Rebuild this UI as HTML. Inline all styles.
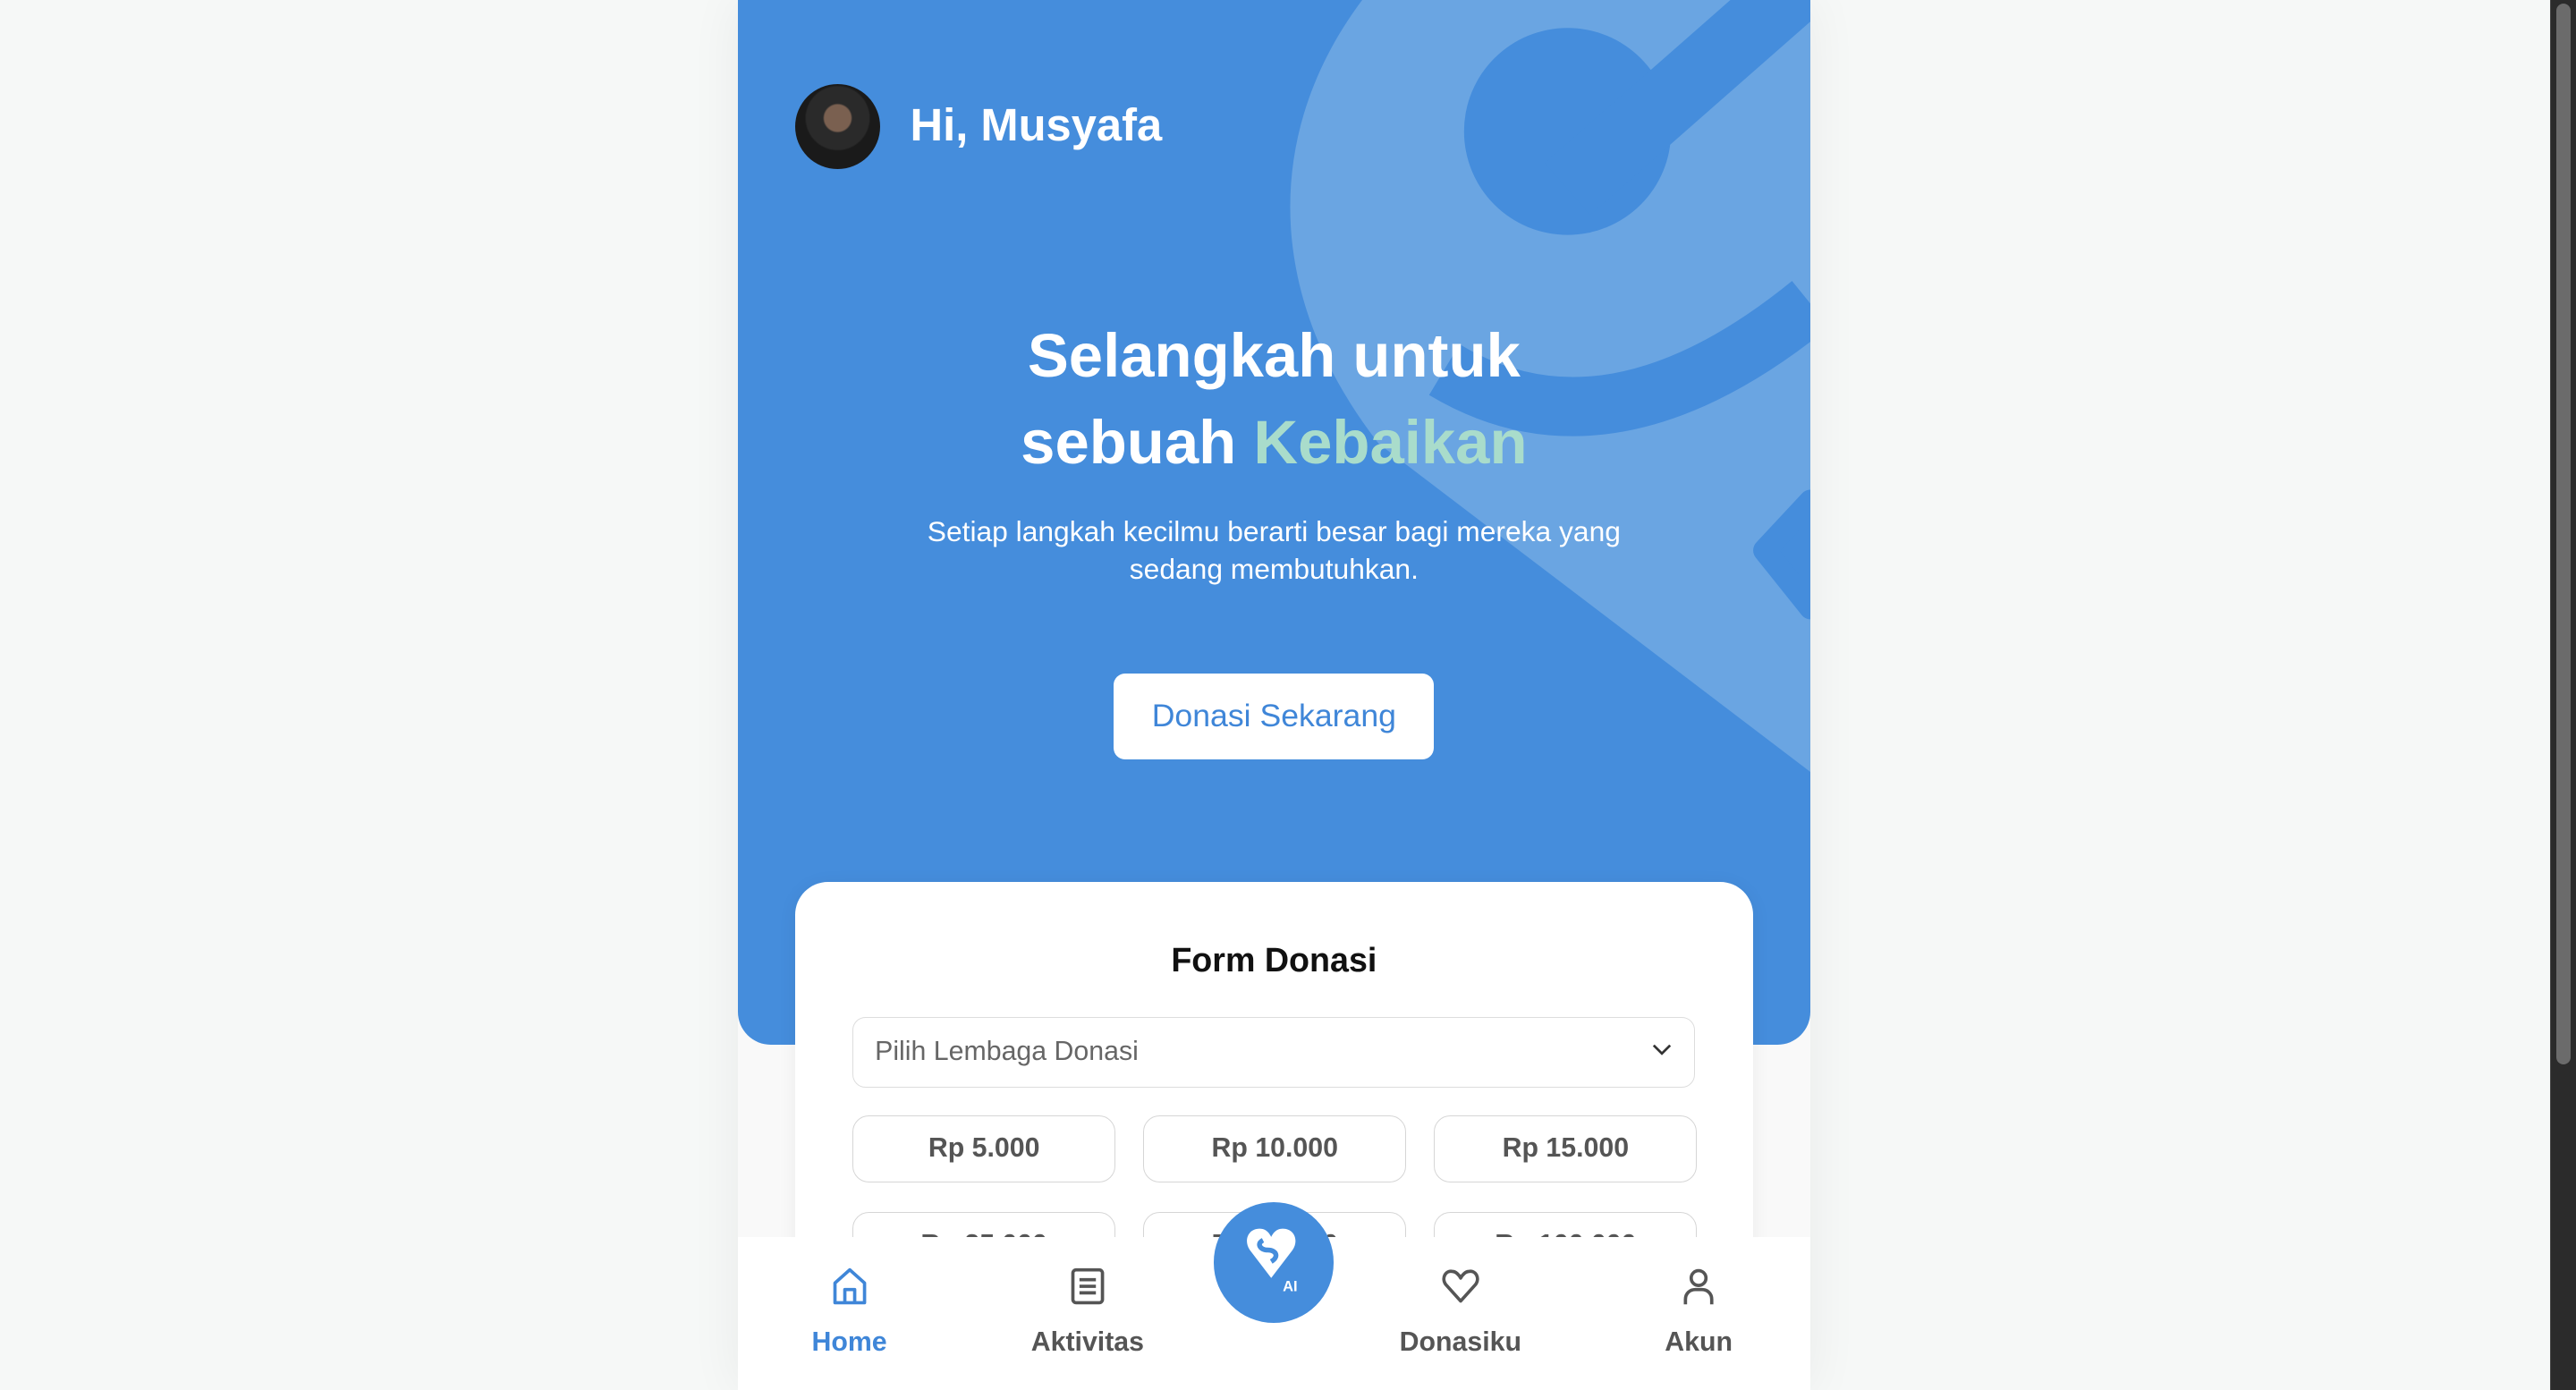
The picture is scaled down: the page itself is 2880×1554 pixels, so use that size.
<!DOCTYPE html>
<html><head><meta charset="utf-8">
<style>
html{zoom:1.8367}
*{margin:0;padding:0;box-sizing:border-box}
body{width:1568px;height:846px;overflow:hidden;background:#f6f8f7;font-family:"Liberation Sans",sans-serif;position:relative}
.abs{position:absolute}
.sb{left:1552px;top:0;width:16px;height:846px;background:#2b2b2b;border-left:1px solid #444}
.thumb{left:1556px;top:2px;width:9px;height:646px;background:#6b6b6b;border-radius:5px}
.phone{left:449px;top:0;width:653px;height:846px;background:#f9f9f9;overflow:hidden;box-shadow:0 0 30px rgba(0,0,0,.06)}
.hero{left:0;top:0;width:653px;height:636px;background:#458ddc;border-radius:0 0 20px 20px;overflow:hidden}
.hi{left:105px;top:60px;color:#fff;font-size:27.6px;font-weight:bold}
.av{left:35px;top:51px;width:52px;height:52px;border-radius:50%;background:radial-gradient(circle at 50% 40%,#7a6050 0 8px,#2a2a2a 9px 19px,#1a1a1a 20px);overflow:hidden}
h1{position:absolute;left:0;width:653px;text-align:center;color:#fff;font-size:37.5px;font-weight:bold;line-height:53px;top:190px}
.k{color:#a9dccb}
.sub{left:0;width:653px;top:312px;text-align:center;color:#fff;font-size:17.3px;line-height:23px}
.btn{left:229px;top:410px;width:195px;height:52px;background:#fff;border-radius:7px;color:#3f86d8;font-size:19.4px;text-align:center;line-height:52px}
.card{left:35px;top:537px;width:583px;height:320px;background:#fff;border-radius:20px;box-shadow:0 2px 12px rgba(0,0,0,.06)}
.ft{left:0;width:583px;top:36px;text-align:center;font-size:20.5px;font-weight:bold;color:#111}
.sel{left:35px;top:82px;width:513px;height:43px;border:1px solid #ddd;border-radius:8px;font-size:16.5px;color:#666;padding-left:13px;line-height:41px}
.am{width:160px;height:41px;border:1px solid #d6d6d6;border-radius:10px;text-align:center;line-height:39px;font-size:16.5px;font-weight:bold;color:#555}
.nav{left:0;top:753px;width:653px;height:93px;background:#fff}
.ni{position:absolute;top:55px;width:120px;text-align:center;font-size:16.5px;font-weight:bold;color:#555}
.fab{left:290px;top:732px;width:73px;height:73px;border-radius:50%;background:#458ddc}
</style></head><body>
<div class="abs phone">
 <div class="abs hero">
  <svg class="abs" style="left:0;top:0" width="653" height="636">
   <path d="M380 0 C320 80 320 180 390 270 L653 470 L653 0 Z" fill="#6aa5e2"/>
   <circle cx="505" cy="80" r="63" fill="#458ddc"/>
   <path d="M505 115 L653 -15" stroke="#458ddc" stroke-width="42" fill="none"/>
   <path d="M430 225 Q530 285 653 185" stroke="#458ddc" stroke-width="36" fill="none"/>
   <path d="M625 335 L653 305 L653 370 Z" fill="#458ddc" stroke="#458ddc" stroke-width="14" stroke-linejoin="round"/>
  </svg>
  <div class="abs av"></div>
  <div class="abs hi">Hi, Musyafa</div>
  <h1>Selangkah untuk<br>sebuah <span class="k">Kebaikan</span></h1>
  <div class="abs sub">Setiap langkah kecilmu berarti besar bagi mereka yang<br>sedang membutuhkan.</div>
  <div class="abs btn">Donasi Sekarang</div>
 </div>
 <div class="abs card">
  <div class="abs ft">Form Donasi</div>
  <div class="abs sel">Pilih Lembaga Donasi
   <svg class="abs" style="right:14px;top:15px" width="12" height="10"><path d="M1 2 L6 7 L11 2" stroke="#333" stroke-width="1.5" fill="none"/></svg></div>
  <div class="abs am" style="left:35px;top:142px">Rp 5.000</div>
  <div class="abs am" style="left:212px;top:142px">Rp 10.000</div>
  <div class="abs am" style="left:389px;top:142px">Rp 15.000</div>
  <div class="abs am" style="left:35px;top:201px">Rp 25.000</div>
  <div class="abs am" style="left:212px;top:201px">Rp 50.000</div>
  <div class="abs am" style="left:389px;top:201px">Rp 100.000</div>
 </div>
 <div class="abs nav">
  <div class="ni" style="left:8px;color:#3f86d8">Home</div>
  <div class="ni" style="left:153px">Aktivitas</div>
  <div class="ni" style="left:380px">Donasiku</div>
  <div class="ni" style="left:525px">Akun</div>
  <svg class="abs" style="left:56px;top:18px" width="24" height="24"><path d="M3 10 L12 2 L21 10 V22 H3 Z M9 22 V14 H15 V22" stroke="#3f86d8" stroke-width="2" fill="none" stroke-linejoin="round"/></svg>
  <svg class="abs" style="left:201px;top:18px" width="24" height="24"><rect x="3" y="2" width="18" height="20" rx="2" stroke="#555" stroke-width="2" fill="none"/><path d="M7 8H17M7 12H17M7 16H17" stroke="#555" stroke-width="2"/></svg>
  <svg class="abs" style="left:428px;top:18px" width="24" height="24"><path d="M12 21 L3 11 C0 7 3 2 7 3 C9 3 11 5 12 7 C13 5 15 3 17 3 C21 2 24 7 21 11 Z" stroke="#555" stroke-width="2" fill="none" stroke-linejoin="round"/></svg>
  <svg class="abs" style="left:573px;top:18px" width="24" height="24"><circle cx="12" cy="7" r="4.5" stroke="#555" stroke-width="2" fill="none"/><path d="M4 23 V20 C4 16 7 14 10 14 H14 C17 14 20 16 20 20 V23" stroke="#555" stroke-width="2" fill="none"/></svg>
 </div>
 <div class="abs fab">
  <svg class="abs" style="left:18px;top:14px" width="38" height="44"><path d="M17 32 L4 15 C0 9 3 2 10 2 C14 2 16 5 17 7 C18 5 20 2 24 2 C31 2 34 9 30 15 Z" fill="#fff"/><path d="M12 9 C8 11 10 15 15 15 C20 15 22 19 17 22" stroke="#458ddc" stroke-width="3" fill="none"/><text x="24" y="40" font-family="Liberation Sans" font-size="9" font-weight="bold" fill="#fff">AI</text></svg>
 </div>
</div>
<div class="abs sb"></div>
<div class="abs thumb"></div>
</body></html>
